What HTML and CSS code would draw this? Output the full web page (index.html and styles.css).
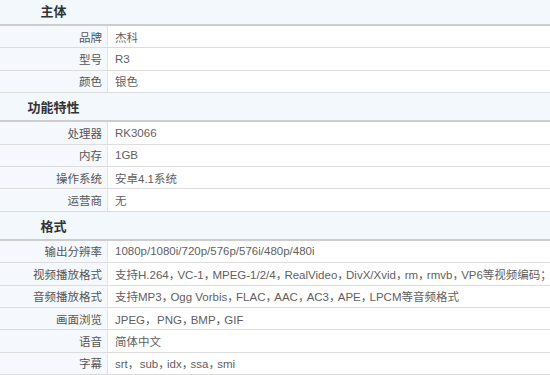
FILE: index.html
```html
<!DOCTYPE html>
<html>
<head>
<meta charset="utf-8">
<link rel="stylesheet" href="styles.css">
</head>
<body>
<div class="spec">
  <div class="sec-head first"><span class="sec-title">主体</span></div>
  <div class="row"><div class="label">品牌</div><div class="value">杰科</div></div>
  <div class="row"><div class="label">型号</div><div class="value">R3</div></div>
  <div class="row"><div class="label">颜色</div><div class="value">银色</div></div>

  <div class="sec-head"><span class="sec-title">功能特性</span></div>
  <div class="row"><div class="label">处理器</div><div class="value">RK3066</div></div>
  <div class="row"><div class="label">内存</div><div class="value">1GB</div></div>
  <div class="row"><div class="label">操作系统</div><div class="value">安卓4.1系统</div></div>
  <div class="row"><div class="label">运营商</div><div class="value">无</div></div>

  <div class="sec-head"><span class="sec-title">格式</span></div>
  <div class="row"><div class="label">输出分辨率</div><div class="value">1080p/1080i/720p/576p/576i/480p/480i</div></div>
  <div class="row"><div class="label">视频播放格式</div><div class="value"><span>支持H.264<i class="cm">，</i>VC-1<i class="cm">，</i>MPEG-1/2/4<i class="cm">，</i>RealVideo<i class="cm">，</i>DivX/Xvid<i class="cm">，</i>rm<i class="cm">，</i>rmvb<i class="cm">，</i>VP6等视频编码；</span></div></div>
  <div class="row"><div class="label">音频播放格式</div><div class="value"><span>支持MP3<i class="cm">，</i>Ogg Vorbis<i class="cm">，</i>FLAC<i class="cm">，</i>AAC<i class="cm">，</i>AC3<i class="cm">，</i>APE<i class="cm">，</i>LPCM等音频格式</span></div></div>
  <div class="row"><div class="label">画面浏览</div><div class="value"><span>JPEG<i class="cm">，</i> PNG<i class="cm">，</i>BMP<i class="cm">，</i>GIF</span></div></div>
  <div class="row"><div class="label">语音</div><div class="value">简体中文</div></div>
  <div class="row"><div class="label">字幕</div><div class="value"><span>srt<i class="cm">，</i> sub<i class="cm">，</i>idx<i class="cm">，</i>ssa<i class="cm">，</i>smi</span></div></div>
</div>
</body>
</html>
```
FILE: styles.css
```css
html, body {
  margin: 0;
  padding: 0;
  background: #ffffff;
  overflow: hidden;
}
body {
  width: 550px;
  height: 375px;
  font-family: "Liberation Sans", "Noto Sans CJK SC", sans-serif;
  font-size: 11.5px;
  color: #666666;
}
.spec {
  display: flex;
  flex-direction: column;
  margin-top: -3px;
}
.sec-head {
  height: 27px;
  background: #f3f8fd;
  border-bottom: 2px solid #cdcdcd;
  display: flex;
  align-items: center;
  flex: none;
}
.sec-title {
  width: 107px;
  text-align: center;
  font-weight: bold;
  font-size: 13px;
  color: #333333;
}
.row {
  height: 21.4px;
  border-bottom: 1px solid #dddddd;
  display: flex;
  flex: none;
  white-space: nowrap;
}
.label {
  width: 102px;
  flex: none;
  background: #f5f9fd;
  border-right: 1px solid #e3e3e3;
  text-align: right;
  padding-right: 5px;
  display: flex;
  align-items: center;
  justify-content: flex-end;
  color: #555555;
}
.value {
  padding-left: 7px;
  display: flex;
  align-items: center;
  overflow: hidden;
  color: #5f5f5f;
  font-feature-settings: "halt";
}
.cm {
  font-style: normal;
  margin-right: 3px;
}
```
